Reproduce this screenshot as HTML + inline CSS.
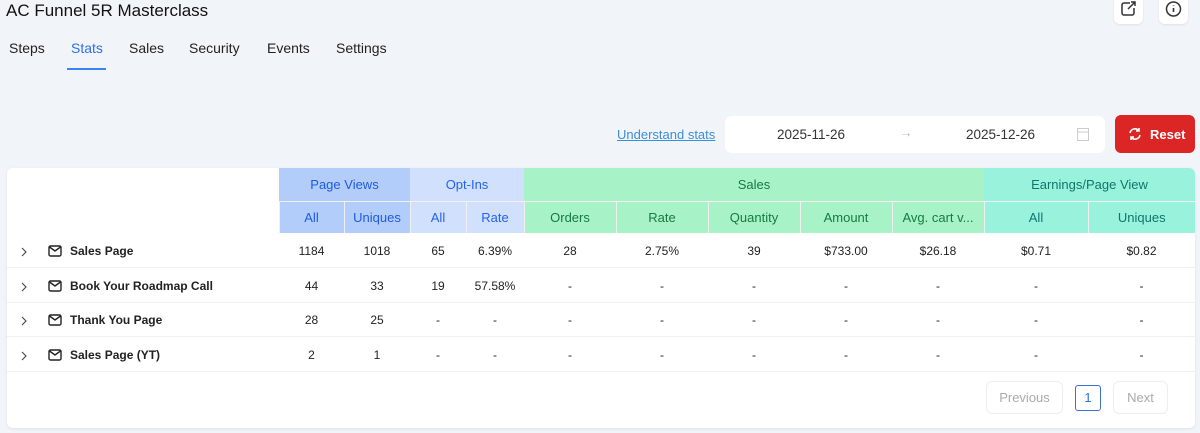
<!DOCTYPE html>
<html><head><style>
*{box-sizing:border-box;margin:0;padding:0}
body{width:1200px;height:433px;background:#f1f5f9;font-family:"Liberation Sans",sans-serif;position:relative;overflow:hidden;color:#111}
.title{position:absolute;left:6px;top:1px;font-size:17px;color:#111}
.ib{position:absolute;top:-4px;width:29px;height:28px;background:#fff;border-radius:6px;box-shadow:0 1px 2px rgba(0,0,0,.08)}
.tabs{position:absolute;top:40px;left:9px;font-size:14px;color:#222}
.tabs span{position:absolute;white-space:nowrap}
.ul{position:absolute;left:67px;top:68px;width:39px;height:2px;background:#3b82f6}
.us{position:absolute;left:617px;top:127px;font-size:13px;color:#3b8fd8;text-decoration:underline}
.dp{position:absolute;left:725px;top:116px;width:380px;height:37px;background:#fff;border-radius:7px;font-size:13.5px;color:#333}
.reset{position:absolute;left:1115px;top:115px;width:80px;height:38px;background:#dc2626;border-radius:6px;color:#fff;font-size:13px;font-weight:bold}
.card{position:absolute;left:7px;top:168px;width:1188px;height:260px;background:#fff;border-radius:6px;box-shadow:0 1px 3px rgba(0,0,0,.08);overflow:hidden}
table{border-collapse:collapse;table-layout:fixed;font-size:12px;position:absolute;left:0;top:0}
td,th{text-align:center;font-weight:normal;white-space:nowrap;overflow:hidden}
th{font-size:13px;height:32px}
.h1 th{height:33px}
.pv{background:#b3cdfb;color:#1d5be0}.oi{background:#d0e0fd;color:#2563eb}
.sa{background:#a7f3c7;color:#177a44}.ea{background:#99f2dc;color:#0f766e}
.h2 th{border-left:1px solid rgba(0,0,0,.06);border-top:1px solid rgba(0,0,0,.05)}
tbody td{height:34.5px;border-bottom:1px solid #eef0f3;color:#222;padding-top:2px}
.nm{text-align:left;padding-left:13px;font-weight:bold;font-size:12px}
.nm svg{vertical-align:-2px}
.pb{position:absolute;top:213px;height:33px;border:1px solid #eee;border-radius:6px;color:#aaa;font-size:13px;text-align:center;line-height:31px}
</style></head><body>
<div class="title">AC Funnel 5R Masterclass</div>
<div class="ib" style="left:1114px"><svg width="29" height="28" viewBox="0 0 29 28"><path d="M16 7h-6a2 2 0 0 0-2 2v8a2 2 0 0 0 2 2h8a2 2 0 0 0 2-2v-5M14 13l7-7M17 6h4v4" fill="none" stroke="#333" stroke-width="1.5"/></svg></div>
<div class="ib" style="left:1159px"><svg width="29" height="28" viewBox="0 0 29 28"><circle cx="14.5" cy="13" r="7" fill="none" stroke="#333" stroke-width="1.5"/><path d="M14.5 12v4M14.5 9.5v.5" stroke="#333" stroke-width="1.6"/></svg></div>
<div class="tabs"><span style="left:0">Steps</span><span style="left:62px;color:#2f6fe0">Stats</span><span style="left:120px">Sales</span><span style="left:180px">Security</span><span style="left:258px">Events</span><span style="left:327px">Settings</span></div>
<div class="ul"></div>
<div class="us">Understand stats</div>
<div class="dp"><span style="position:absolute;left:52px;top:11px">2025-11-26</span><span style="position:absolute;left:174px;top:9px;color:#bbb">→</span><span style="position:absolute;left:241px;top:11px">2025-12-26</span><svg style="position:absolute;left:352px;top:12px" width="12" height="13"><rect x="0.5" y="0.5" width="11" height="12" fill="none" stroke="#ccc"/><path d="M1 4h10" stroke="#ccc"/></svg></div>
<div class="reset"><svg style="position:absolute;left:13px;top:12px" width="14" height="14" viewBox="0 0 14 14"><path d="M2 6a5 5 0 0 1 9-2M12 8a5 5 0 0 1-9 2M11 1v3H8M3 13v-3h3" fill="none" stroke="#fff" stroke-width="1.6"/></svg><span style="position:absolute;left:35px;top:12px">Reset</span></div>
<div class="card">
<table>
<colgroup><col style="width:272px"><col style="width:65px"><col style="width:66px"><col style="width:56px"><col style="width:58px"><col style="width:92px"><col style="width:92px"><col style="width:92px"><col style="width:92px"><col style="width:92px"><col style="width:104px"><col style="width:107px"></colgroup>
<thead>
<tr class="h1"><th rowspan="2" style="background:#fff"></th><th colspan="2" class="pv">Page Views</th><th colspan="2" class="oi">Opt-Ins</th><th colspan="5" class="sa">Sales</th><th colspan="2" class="ea">Earnings/Page View</th></tr>
<tr class="h2"><th class="pv">All</th><th class="pv">Uniques</th><th class="oi">All</th><th class="oi">Rate</th><th class="sa">Orders</th><th class="sa">Rate</th><th class="sa">Quantity</th><th class="sa">Amount</th><th class="sa">Avg. cart v...</th><th class="ea">All</th><th class="ea">Uniques</th></tr>
</thead>
<tbody>
<tr><td class="nm"><svg width="8" height="10" style="margin-right:20px"><path d="M2 1l4 4-4 4" fill="none" stroke="#444" stroke-width="1.1"/></svg><svg width="14" height="12" style="margin-right:8px"><rect x="1" y="1" width="12" height="10" rx="1.5" fill="none" stroke="#222" stroke-width="1.4"/><path d="M1.5 2l5.5 4 5.5-4" fill="none" stroke="#222" stroke-width="1.4"/></svg>Sales Page</td><td>1184</td><td>1018</td><td>65</td><td>6.39%</td><td>28</td><td>2.75%</td><td>39</td><td>$733.00</td><td>$26.18</td><td>$0.71</td><td>$0.82</td></tr>
<tr><td class="nm"><svg width="8" height="10" style="margin-right:20px"><path d="M2 1l4 4-4 4" fill="none" stroke="#444" stroke-width="1.1"/></svg><svg width="14" height="12" style="margin-right:8px"><rect x="1" y="1" width="12" height="10" rx="1.5" fill="none" stroke="#222" stroke-width="1.4"/><path d="M1.5 2l5.5 4 5.5-4" fill="none" stroke="#222" stroke-width="1.4"/></svg>Book Your Roadmap Call</td><td>44</td><td>33</td><td>19</td><td>57.58%</td><td>-</td><td>-</td><td>-</td><td>-</td><td>-</td><td>-</td><td>-</td></tr>
<tr><td class="nm"><svg width="8" height="10" style="margin-right:20px"><path d="M2 1l4 4-4 4" fill="none" stroke="#444" stroke-width="1.1"/></svg><svg width="14" height="12" style="margin-right:8px"><rect x="1" y="1" width="12" height="10" rx="1.5" fill="none" stroke="#222" stroke-width="1.4"/><path d="M1.5 2l5.5 4 5.5-4" fill="none" stroke="#222" stroke-width="1.4"/></svg>Thank You Page</td><td>28</td><td>25</td><td>-</td><td>-</td><td>-</td><td>-</td><td>-</td><td>-</td><td>-</td><td>-</td><td>-</td></tr>
<tr><td class="nm"><svg width="8" height="10" style="margin-right:20px"><path d="M2 1l4 4-4 4" fill="none" stroke="#444" stroke-width="1.1"/></svg><svg width="14" height="12" style="margin-right:8px"><rect x="1" y="1" width="12" height="10" rx="1.5" fill="none" stroke="#222" stroke-width="1.4"/><path d="M1.5 2l5.5 4 5.5-4" fill="none" stroke="#222" stroke-width="1.4"/></svg>Sales Page (YT)</td><td>2</td><td>1</td><td>-</td><td>-</td><td>-</td><td>-</td><td>-</td><td>-</td><td>-</td><td>-</td><td>-</td></tr>
</tbody></table>
<div class="pb" style="left:979px;width:77px">Previous</div>
<div class="pb" style="left:1068px;top:217px;width:26px;height:26px;line-height:24px;border:1px solid #3b6fd8;color:#2f6fe0;border-radius:3px">1</div>
<div class="pb" style="left:1106px;width:55px">Next</div>
</div>
</body></html>
